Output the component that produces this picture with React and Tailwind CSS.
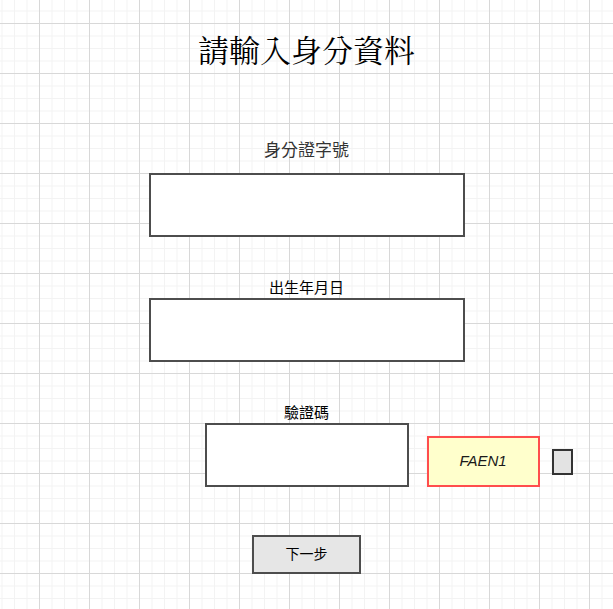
import React from 'react';

const cjk = 'font-["Liberation_Sans","Noto_Sans_CJK_TC",sans-serif]';

const IdentityForm = () => {
    return (
        <div
            className={`min-h-screen w-full bg-white ${cjk} [background-image:linear-gradient(to_right,#d8d8d8_1px,transparent_1px),linear-gradient(to_bottom,#d8d8d8_1px,transparent_1px),linear-gradient(to_right,#f3f3f3_1px,transparent_1px),linear-gradient(to_bottom,#f3f3f3_1px,transparent_1px)] [background-size:50px_50px,50px_50px,12.5px_12.5px,12.5px_12.5px] [background-position:39px_23px,39px_23px,39px_23px,39px_23px]`}
        >
            <div className="flex flex-col items-center pt-[34px]">
                {/* Title */}
                <h1 className='text-[31px] leading-[30px] text-black font-["Noto_Serif_CJK_TC","Noto_Sans_CJK_TC",serif]'>
                    請輸入身分資料
                </h1>

                {/* ID number */}
                <label className="mt-[78px] text-[17px] leading-[17px] text-[#333]">身分證字號</label>
                <div className="mt-[14px] w-[316px] h-[64px] bg-white border-2 border-[#4d4d4d]" />

                {/* Birthday */}
                <label className="mt-[43px] text-[15px] leading-[15px] text-black">出生年月日</label>
                <div className="mt-[3px] w-[316px] h-[64px] bg-white border-2 border-[#4d4d4d]" />

                {/* Captcha */}
                <label className="mt-[43px] text-[15px] leading-[15px] text-black">驗證碼</label>
                <div className="mt-[3px] w-full grid grid-cols-[1fr_auto_1fr]">
                    <div />
                    <div className="w-[204px] h-[64px] bg-white border-2 border-[#4d4d4d]" />
                    <div className="flex items-end pl-[18px]">
                        <div className="flex items-center gap-[12px]">
                            <div className="w-[113px] h-[51px] bg-[#ffffcc] border-2 border-[#ff4d4d] flex items-center justify-center">
                                <span className="italic text-[15px] text-[#1a1a1a]">FAEN1</span>
                            </div>
                            <div className="w-[21px] h-[26px] bg-[#e3e3e3] border-2 border-[#333]" />
                        </div>
                    </div>
                </div>

                {/* Next */}
                <button className="mt-[48px] w-[109px] h-[39px] bg-[#e6e6e6] border-2 border-[#4d4d4d] text-[14px] text-black">
                    下一步
                </button>
            </div>
        </div>
    );
};

export default function App() {
    return <IdentityForm />;
}
